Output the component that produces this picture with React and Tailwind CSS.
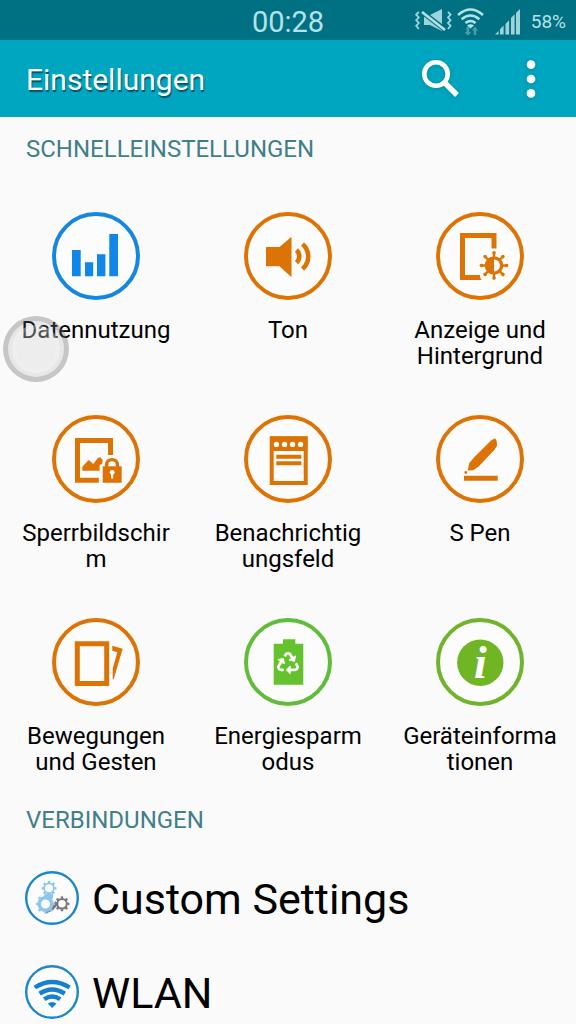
import { FaRecycle } from "react-icons/fa";

const ORANGE = "#dc7405";

const TEETH = [0, 45, 90, 135, 180, 225, 270, 315];

function Gear({ cx, cy, r, hole, color }) {
  return (
    <g transform={`translate(${cx} ${cy})`} fill="none" stroke={color}>
      <circle r={(r + hole) / 2} strokeWidth={r - hole} />
      {TEETH.map((a) => (
        <path key={a} d={`M0 ${-r + 0.5}V${-r - 1.6}`} strokeWidth="2.4" transform={`rotate(${a})`} />
      ))}
    </g>
  );
}

function Ring({ color, children }) {
  return (
    <svg viewBox="0 0 88 88" className="size-22" aria-hidden="true">
      <circle cx="44" cy="44" r="42" fill="#fcfcfc" stroke={color} strokeWidth="4" />
      {children}
    </svg>
  );
}

function DataIcon() {
  return (
    <Ring color="#1587dc">
      <path fill="#0f86e8" d="M20 38h8.7v26.3H20zM33 50.3h8.2v14H33zM45 42.3h8.4v22H45zM57.3 22H66v42.3h-8.7z" />
    </Ring>
  );
}

function SoundIcon() {
  return (
    <Ring color={ORANGE}>
      <path fill={ORANGE} d="M22 35h13.5L47.5 24.7v40.6L35.5 54.3H22z" />
      <path fill="none" stroke={ORANGE} strokeWidth="4.6" d="M52.5 38a8.5 8.5 0 0 1 0 12.6M58.5 32a16.5 16.5 0 0 1 0 25" />
    </Ring>
  );
}

function DisplayIcon() {
  return (
    <Ring color={ORANGE}>
      <path fill="none" stroke={ORANGE} strokeWidth="5" d="M58 36.5V23.5H26.5v42H44" />
      <path fill={ORANGE} d="M41 63h2l2.5 5H41z" />
      <g transform="translate(58 53.5)">
        <circle r="9.3" fill={ORANGE} />
        {TEETH.map((a) => (
          <g key={a} transform={`rotate(${a})`}>
            <path d="M0-8v-4" stroke={ORANGE} strokeWidth="2.4" />
            <circle cy="-12.6" r="1.8" fill={ORANGE} />
          </g>
        ))}
        <path d="M0-6a6 6 0 0 1 0 12z" fill="#fcfcfc" />
      </g>
    </Ring>
  );
}

function LockIcon() {
  return (
    <Ring color={ORANGE}>
      <path fill="none" stroke={ORANGE} strokeWidth="5" d="M58.5 40V25.5h-33v39.7h21.3" />
      <path fill={ORANGE} d="M30.3 55.7v-4l6.5-6.7 4.5 4 4.5-6 2.7-.7 2.2 3-.5 3.8-2.6.8v5.8z" />
      <path fill="none" stroke={ORANGE} strokeWidth="3.4" d="M54.6 52v-2.4a5.4 5 0 0 1 10.8 0V52" />
      <path fill={ORANGE} d="M50.7 51.3h19v16.5h-19z" />
      <circle cx="60.2" cy="57.3" r="2.4" fill="#fff" />
      <path stroke="#fff" strokeWidth="2" d="M60.2 58v5.5" />
    </Ring>
  );
}

function NotificationIcon() {
  return (
    <Ring color={ORANGE}>
      <path fill="none" stroke={ORANGE} strokeWidth="4" d="M27.7 23.3h34V68h-34z" />
      <path fill={ORANGE} d="M26 21.5h37.5V36H26z" />
      <g fill="#fff">
        <circle cx="32.4" cy="29.4" r="2.6" />
        <circle cx="40.6" cy="29.4" r="2.6" />
        <circle cx="48.6" cy="29.4" r="2.6" />
        <circle cx="56.6" cy="29.4" r="2.6" />
      </g>
      <path stroke={ORANGE} strokeWidth="4" d="M32.3 41.7h25M32.3 48.3h25" />
    </Ring>
  );
}

function PenIcon() {
  return (
    <Ring color={ORANGE}>
      <path fill={ORANGE} d="M31.6 55.5l1.8-7.4 5-6.2L55 25.6l4-2.4 1.6 2.6.5 5-2.6 4-15.6 16.4-5.6 4z" />
      <circle cx="29.8" cy="57.5" r="1.4" fill={ORANGE} />
      <path fill={ORANGE} d="M28 60.8h33.7v5H28z" />
    </Ring>
  );
}

function MotionIcon() {
  return (
    <Ring color={ORANGE}>
      <path fill="none" stroke={ORANGE} strokeWidth="5" d="M25.3 25.7h29.4v39.8H25.3z" />
      <path fill={ORANGE} d="M60.3 27.7l10.4 3-9 30.6h-1V50.5l4.6-16.2-5-1.6z" />
    </Ring>
  );
}

function BatteryIcon() {
  return (
    <Ring color="#62bc3c">
      <path fill="#64c22c" d="M39 21.3h12.3v4.4h8v41H29.7v-41H39z" />
      <FaRecycle x="33" y="34" width="23" height="22" size={22} color="#fff" />
    </Ring>
  );
}

function InfoIcon() {
  return (
    <Ring color="#70b32c">
      <circle cx="44.3" cy="44.7" r="23.2" fill="#70b524" />
      <text
        x="44.5"
        y="60"
        textAnchor="middle"
        fill="#fff"
        fontSize="46"
        fontWeight="bold"
        fontStyle="italic"
        fontFamily="Liberation Serif, serif"
      >
        i
      </text>
    </Ring>
  );
}

function CustomIcon() {
  return (
    <svg viewBox="0 0 54 54" className="size-[54px]" aria-hidden="true">
      <circle cx="27" cy="27" r="25.8" fill="#fcfcfc" stroke="#1c86c8" strokeWidth="2.4" />
      <path fill="none" stroke="#777" strokeWidth="4" d="M20 41l7-3.5 5-6" />
      <Gear cx={37} cy={32.8} r={5.8} hole={3.8} color="#777" />
      <Gear cx={24} cy={17.3} r={5.8} hole={4} color="#8cc6ec" />
      <path stroke="#8cc6ec" strokeWidth="8" d="M24 23v4" />
      <Gear cx={20.5} cy={33} r={8} hole={4.6} color="#8cc6ec" />
    </svg>
  );
}

function WlanIcon() {
  return (
    <svg viewBox="0 0 54 54" className="size-[54px]" aria-hidden="true">
      <circle cx="27" cy="27" r="25.8" fill="#fcfcfc" stroke="#1c86c8" strokeWidth="2.4" />
      <g fill="none" stroke="#1580d0" strokeWidth="4.4">
        <path d="M9.8 22.5q17.4-11 34.8 0" />
        <path d="M14.6 28.6q12.6-8.4 25.2 0" />
        <path d="M19.2 34.2q8-5.4 16 0" />
      </g>
      <path fill="#1580d0" d="M22.8 38.4q4.4-3 8.8 0L27.2 43z" />
    </svg>
  );
}

function StatusIcons() {
  return (
    <svg viewBox="0 0 108 28" className="h-7 w-27" aria-hidden="true">
      {/* mute + vibration */}
      <g fill="none" stroke="#9fd3dc" strokeWidth="1.8">
        <path d="M3.8 5L1.2 7.6l2.6 2.8-2.6 2.8 2.6 2.8-2.6 2.8L3.8 22" />
        <path d="M33 5l2.6 2.6-2.6 2.8 2.6 2.8-2.6 2.8 2.6 2.8L33 22" />
      </g>
      <path fill="#9fd3dc" d="M9 8h6l12-6v22l-12-6H9z" />
      <path stroke="#007182" strokeWidth="5" d="M6.5 4.5l24 18.5" />
      <path stroke="#b5e2e8" strokeWidth="2.6" d="M7 5l23 18" />
      {/* wifi */}
      <g fill="none" stroke="#b5e2e8" strokeWidth="2.6">
        <path d="M43 8q12.5-11 25 0" />
        <path d="M46.6 12.2q8.9-7.4 17.8 0" />
        <path d="M50.4 16q5.1-4 10.2 0" />
      </g>
      <path fill="#b5e2e8" d="M52 18.5q3.5-2.4 7 0l-3.5 3z" />
      <path fill="#4a9ca8" d="M51.5 20h2.8v5h2l-3.4 4-3.4-4h2zM60 19.5l3.2 4h-1.9V28h-2.6v-4.5h-1.9z" />
      {/* signal */}
      <path
        fill="#9fd3dc"
        d="M80 27.5l3.6-3.6v3.6zM85 22.3l3.6-3.8v9H85zM90.5 17l3.6-3.8v14.3h-3.6zM96 11l3.6-3.8v20.3H96zM101 6l4-4v25.5h-4z"
      />
    </svg>
  );
}

const quickSettings = [
  { label: "Datennutzung", Icon: DataIcon },
  { label: "Ton", Icon: SoundIcon },
  { label: "Anzeige und Hintergrund", Icon: DisplayIcon },
  { label: "Sperrbildschirm", Icon: LockIcon },
  { label: "Benachrichtigungsfeld", Icon: NotificationIcon },
  { label: "S Pen", Icon: PenIcon },
  { label: "Bewegungen und Gesten", Icon: MotionIcon },
  { label: "Energiesparmodus", Icon: BatteryIcon },
  { label: "Geräteinformationen", Icon: InfoIcon },
];

const connections = [
  { label: "Custom Settings", Icon: CustomIcon },
  { label: "WLAN", Icon: WlanIcon },
];

export default function App() {
  return (
    <div className="relative min-h-screen bg-[#fafafa] font-[Roboto,sans-serif] text-black">
      <div className="grid h-10 grid-cols-[1fr_auto_1fr] items-center bg-[#007182] text-[#b5e2e8]">
        <span className="col-start-2 pt-0.5 text-[29px] leading-10">00:28</span>
        <div className="flex items-center justify-end gap-2 pr-[10px]">
          <StatusIcons />
          <span className="pt-0.5 text-[19px]">58%</span>
        </div>
      </div>

      <header className="flex h-[77px] items-center bg-[#00a5bf] pr-[38px] pl-[26px] text-white">
        <h1 className="flex-1 pt-0.5 text-[30px] [text-shadow:1px_2px_1px_#00566a]">Einstellungen</h1>
        <button type="button" aria-label="Suchen" className="mr-16">
          <svg viewBox="0 0 38 38" className="size-[38px] drop-shadow-sm" fill="none" stroke="#fff">
            <circle cx="14" cy="14" r="11.7" strokeWidth="4.6" />
            <path d="M22.5 22.5L35 35" strokeWidth="5.4" />
          </svg>
        </button>
        <button type="button" aria-label="Weitere Optionen">
          <svg viewBox="0 0 14 38" className="h-[38px] w-3.5 drop-shadow-sm" fill="#fff">
            <circle cx="7" cy="4.6" r="4.3" />
            <circle cx="7" cy="19" r="4.3" />
            <circle cx="7" cy="33.4" r="4.3" />
          </svg>
        </button>
      </header>

      <main>
        <h2 className="px-[26px] pt-4 text-2xl text-[#3f7f88]">SCHNELLEINSTELLUNGEN</h2>
        <div className="mt-[47px] grid grid-cols-3 gap-y-[46px]">
          {quickSettings.map(({ label, Icon }) => (
            <button key={label} type="button" className="flex h-[157px] flex-col items-center gap-[17px]">
              <Icon />
              <span className="w-[154px] text-2xl/[26px] wrap-break-word">{label}</span>
            </button>
          ))}
        </div>

        <h2 className="px-[26px] pt-[29px] text-2xl text-[#3f7f88]">VERBINDUNGEN</h2>
        <ul className="mt-[35px] flex flex-col gap-10 px-[25px]">
          {connections.map(({ label, Icon }) => (
            <li key={label}>
              <button type="button" className="flex h-[54px] w-full items-center gap-[13px] text-left">
                <Icon />
                <span className="pt-0.5 text-[43px]">{label}</span>
              </button>
            </li>
          ))}
        </ul>
      </main>

      {/* assistive touch bubble */}
      <button
        type="button"
        aria-label="Schnellzugriff"
        className="absolute top-[316px] left-[3px] size-[66px] rounded-full border-[5px] border-[#606060]/25 bg-[#808080]/15 p-1"
      >
        <span className="block size-full rounded-full border-4 border-white/15 bg-white/25" />
      </button>
    </div>
  );
}
